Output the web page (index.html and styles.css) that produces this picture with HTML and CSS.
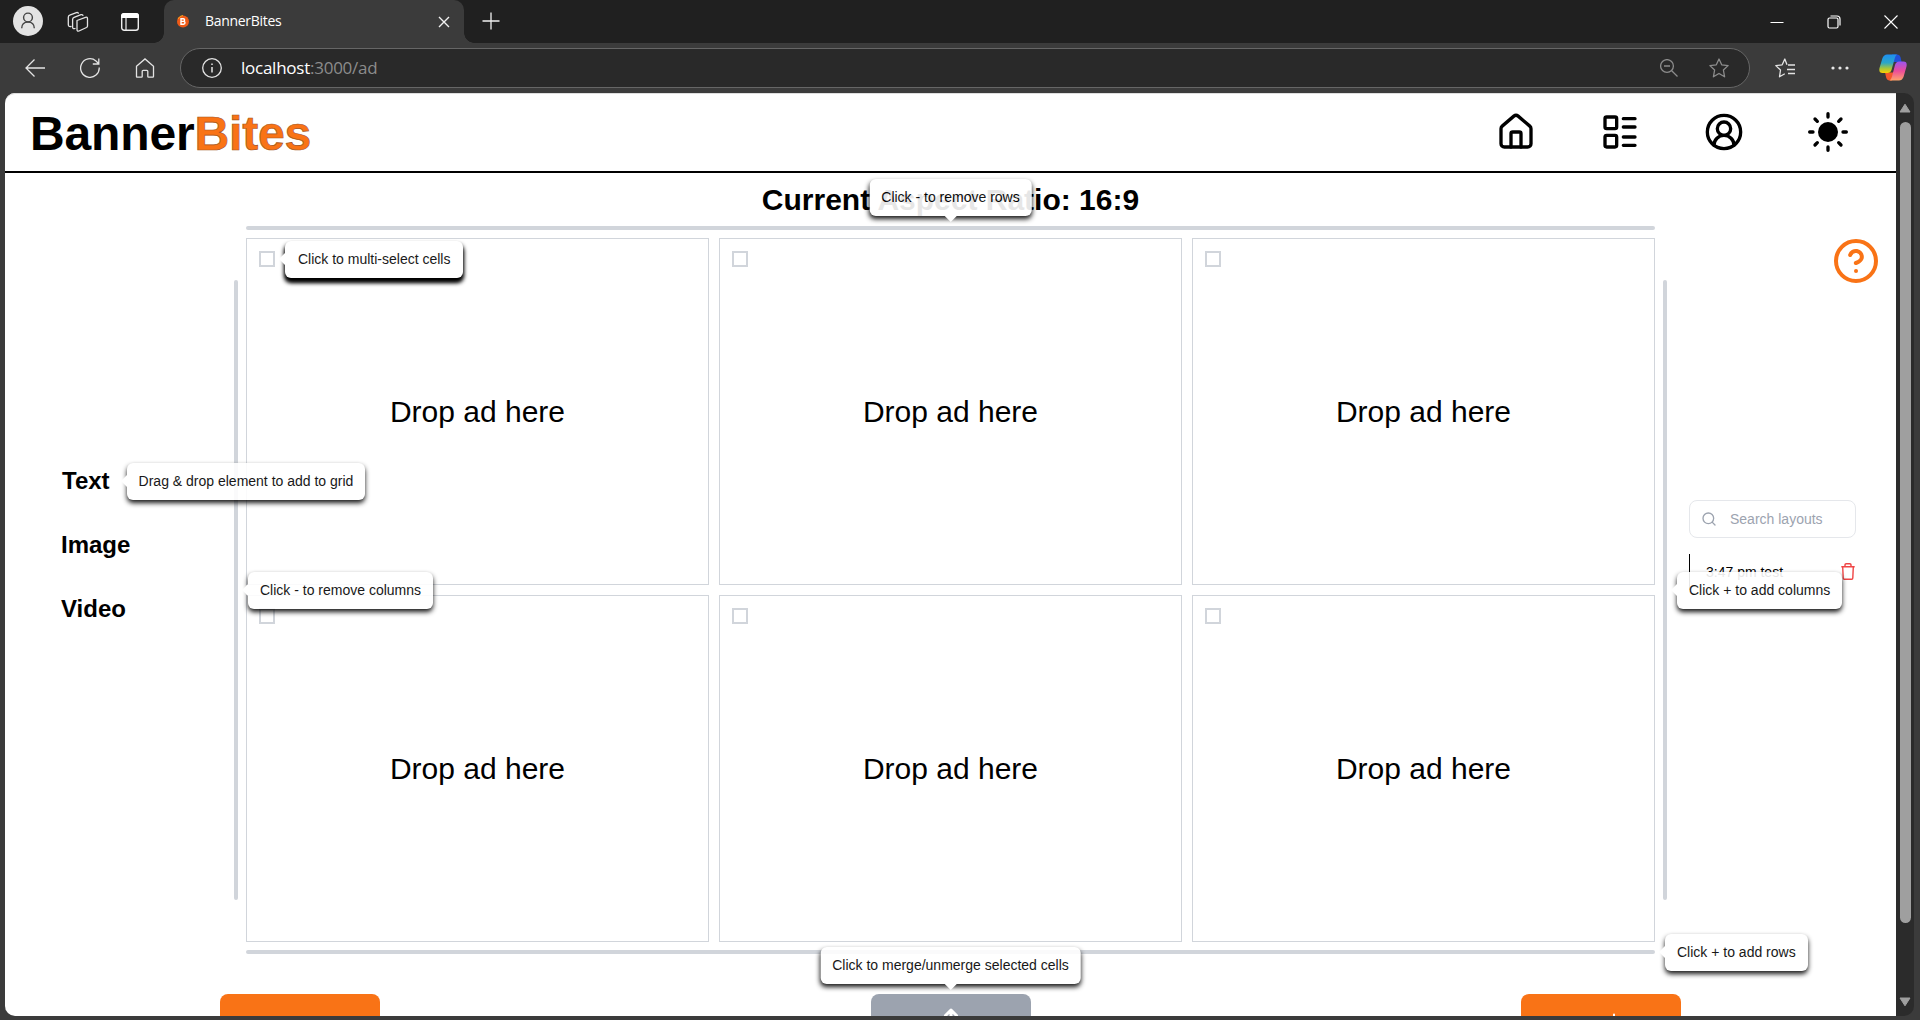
FILE: index.html
```html
<!DOCTYPE html>
<html lang="en">
<head>
<meta charset="utf-8">
<title>BannerBites</title>
<link rel="stylesheet" href="styles.css">
</head>
<body>
<div class="browser">
  <div class="titlebar">
    <div class="window-tools">
      <svg class="avatar" width="30" height="30" viewBox="0 0 30 30"><circle cx="15" cy="15" r="15" fill="#e3e3e3"/><g fill="none" stroke="#444" stroke-width="1.4"><circle cx="15" cy="11.5" r="4.4"/><path d="M8.7 22.2c0-3.4 2.2-6.200 6.300-6.200s6.300 2.800 6.300 6.200"/></g></svg>
      <svg class="spaces" width="22" height="22" viewBox="0 0 22 22" fill="none" stroke="#e4e4e4" stroke-width="1.300" stroke-linejoin="round" stroke-linecap="round"><path d="M10 9.500 18.500 6.300q2-.500 2 1.400v7.300q0 1-1 1.500l-7.500 3.500q-2 .6-2-1.400z"/><path d="M8 17.500q-2.400.8-2.400-1.500V8.500q0-1.600 1.500-2.200l6.900-2.600q1.300-.4 2 .6"/><path d="M4 15.500q-2.700.5-2.700-1.900V6.200q0-1.500 1.400-2L9.400 1.600q1.300-.3 2 .5"/></svg>
      <svg class="panel-icon" width="18" height="18" viewBox="0 0 18 18"><rect x=".7" y=".7" width="16.600" height="16.600" rx="2.500" fill="none" stroke="#eee" stroke-width="1.400"/><path d="M0 5V3a3 3 0 0 1 3-3h12a3 3 0 0 1 3 3v2z" fill="#fff"/><path d="M5 5v12" stroke="#eee" stroke-width="1.200"/></svg>
    </div>
    <div class="tab">
      <svg width="12" height="13" viewBox="0 0 12 13"><circle cx="6" cy="6.500" r="6" fill="#ee5a17"/><path d="M1 4a6 6 0 0 1 5-3.500" stroke="#fba31c" fill="none"/><path d="M4 3.800v5.400h2.600a1.400 1.400 0 0 0 0-2.800H4h2.300a1.300 1.300 0 0 0 0-2.600z" fill="none" stroke="#fff" stroke-width="1.400"/></svg>
      <span class="tab-title">BannerBites</span>
      <svg width="12" height="12" viewBox="0 0 12 12" stroke="#f1f1f1" stroke-width="1.400"><path d="M1 1l10 10M11 1 1 11"/></svg>
    </div>
    <svg class="new-tab" width="18" height="18" viewBox="0 0 18 18" stroke="#f1f1f1" stroke-width="1.300"><path d="M9 .5v17M.5 9h17"/></svg>
    <div class="window-controls">
      <svg width="14" height="14" viewBox="0 0 14 14" stroke="#fff"><path d="M.5 7.500h13"/></svg>
      <svg width="14" height="14" viewBox="0 0 14 14" fill="none" stroke="#fff" stroke-width="1.200"><rect x="1" y="3" width="10" height="10" rx="1.500"/><path d="M3.500 1H10a3 3 0 0 1 3 3v6.500"/></svg>
      <svg width="14" height="14" viewBox="0 0 14 14" stroke="#fff" stroke-width="1.100"><path d="M.5.5l13 13M13.500.5l-13 13"/></svg>
    </div>
  </div>
  <div class="toolbar">
    <div class="nav-buttons">
      <svg width="20" height="20" viewBox="0 0 20 20"><path d="M9.500 1.500 1 10l8.500 8.500M1 10h19"/></svg>
      <svg width="20" height="20" viewBox="0 0 20 20"><path d="M19.200 9.500A9.300 9.300 0 1 1 16 3l2.500 2.500M18.800.5v5.500h-6"/></svg>
      <svg width="20" height="20" viewBox="0 0 20 20"><path d="M1.500 8.200 10 .9l8.500 7.300v10.300q0 .7-.7.700h-4.300q-.7 0-.7-.7v-5.200q0-1-1-1H8.200q-1 0-1 1v5.200q0 .7-.7.700H2.200q-.7 0-.7-.7z"/></svg>
    </div>
    <div class="address">
      <svg width="20" height="20" viewBox="0 0 20 20"><circle cx="10" cy="10" r="9.300"/><path d="M10 9v5.500M10 5.500v1.500" stroke-width="1.500"/></svg>
      <span class="url"><span class="host">localhost</span>:3000/ad</span>
      <svg class="dim" width="18" height="18" viewBox="0 0 18 18"><circle cx="7" cy="7" r="6.400"/><path d="M4 7h6M11.700 11.700l5.800 5.800"/></svg>
      <svg class="dim" width="20" height="20" viewBox="0 0 20 20"><path d="m10 1 2.700 5.800 6.400.8-4.700 4.400 1.200 6.800L10 15.500l-5.600 3.300L5.600 12 .9 7.600l6.400-.8z" stroke-linejoin="round"/></svg>
    </div>
    <div class="toolbar-actions">
      <svg width="20" height="20" viewBox="0 0 20 20"><path d="M12 6.800 9.800 1 7.200 6.800l-6.400.8L5.500 12l-1 6.800 5.300-3M13 7h7M12 11.500h8M13 15.500h7" stroke-linejoin="round"/></svg>
      <svg width="18" height="4" viewBox="0 0 18 4" class="dots"><circle cx="2" cy="2" r="1.600"/><circle cx="9" cy="2" r="1.600"/><circle cx="16" cy="2" r="1.600"/></svg>
      <svg width="28" height="27" viewBox="0 0 28 27" class="copilot">
        <defs>
          <linearGradient id="cp1" x1="0" y1="0" x2="0" y2="1"><stop offset="0" stop-color="#1d8ff2"/><stop offset=".45" stop-color="#2ba6c9"/><stop offset=".75" stop-color="#a6c63c"/><stop offset="1" stop-color="#ffd000"/></linearGradient>
          <linearGradient id="cp2" x1="0" y1="0" x2="0" y2="1"><stop offset="0" stop-color="#9a55f0"/><stop offset=".5" stop-color="#ec4c9a"/><stop offset="1" stop-color="#ffa36b"/></linearGradient>
        </defs>
        <path d="M13 .5h5q2.800 0 3.600 3l1 4.500h-8z" fill="#2150d8"/>
        <path d="M6 18.500h9l-2 8h-2.500q-2.500 0-3.300-3z" fill="#f4572c"/>
        <path d="M8 .5h10q-1.600 1-2.300 4l-3.200 11.500q-1 3-4 3H3.500q-4 0-3-5L3.500 4Q5 .5 8 .5z" fill="url(#cp1)"/>
        <path d="M20 26.500h-9.500q1.800-1 2.500-4l3-11.500q1-3.500 4-3.500h4.500q4 0 3 5l-3 10.500q-1.500 3.500-4.500 3.500z" fill="url(#cp2)"/>
      </svg>
    </div>
  </div>
  <div class="viewport">
    <div class="page">
      <header class="header">
        <h1 class="logo">Banner<span class="logo-accent">Bites</span></h1>
        <nav class="menu">
          <svg viewBox="0 0 24 24"><path d="M15 21v-8a1 1 0 0 0-1-1h-4a1 1 0 0 0-1 1v8"/><path d="M3 10a2 2 0 0 1 .709-1.528l7-5.999a2 2 0 0 1 2.582 0l7 5.999A2 2 0 0 1 21 10v9a2 2 0 0 1-2 2H5a2 2 0 0 1-2-2z"/></svg>
          <svg viewBox="0 0 24 24"><rect x="3" y="3" width="7" height="7" rx="1"/><rect x="3" y="14" width="7" height="7" rx="1"/><path d="M14 4h7M14 9h7M14 15h7M14 20h7"/></svg>
          <svg viewBox="0 0 24 24"><path d="M18 20a6 6 0 0 0-12 0"/><circle cx="12" cy="10" r="4"/><circle cx="12" cy="12" r="10"/></svg>
          <svg viewBox="0 0 24 24"><circle cx="12" cy="12" r="6" fill="#000" stroke="none"/><path d="M12 1v2M12 21v2M1 12h2M21 12h2M4.200 4.200l1.400 1.400M18.400 18.400l1.400 1.400M4.200 19.800l1.400-1.400M18.400 5.600l1.400-1.400"/></svg>
        </nav>
      </header>
      <h2 class="ratio">Current Aspect Ratio: 16:9</h2>
      <main class="workspace">
        <aside class="elements">
          <div class="element element-hinted">Text<span class="tip tip-right">Drag &amp; drop element to add to grid</span></div>
          <div class="element">Image</div>
          <div class="element">Video</div>
        </aside>
        <div class="bar-v"><span class="tip tip-right">Click - to remove columns</span></div>
        <section class="board">
          <div class="bar-h"><span class="tip tip-top">Click - to remove rows</span></div>
          <div class="cells">
            <div class="cell"><span class="check"><span class="tip tip-right tip-strong">Click to multi-select cells</span></span>Drop ad here</div>
            <div class="cell"><span class="check"></span>Drop ad here</div>
            <div class="cell"><span class="check"></span>Drop ad here</div>
            <div class="cell"><span class="check"></span>Drop ad here</div>
            <div class="cell"><span class="check"></span>Drop ad here</div>
            <div class="cell"><span class="check"></span>Drop ad here</div>
          </div>
          <div class="bar-h"><span class="tip tip-right">Click + to add rows</span></div>
        </section>
        <div class="bar-v"><span class="tip tip-right">Click + to add columns</span></div>
        <aside class="layouts">
          <svg class="help" viewBox="0 0 24 24"><circle cx="12" cy="12" r="10"/><path d="M9.090 9a3 3 0 0 1 5.830 1c0 2-3 3-3 3M12 17h.01"/></svg>
          <div class="search"><svg viewBox="0 0 24 24"><circle cx="11" cy="11" r="8"/><path d="m21 21-4.300-4.300"/></svg>Search layouts</div>
          <div class="layout-row"><span class="layout-name">3:47 pm test</span>
            <svg viewBox="0 0 14 17"><path d="M.3 3.700h13.400M1.700 3.700l.5 11.300q0 1.300 1.200 1.300h7.200q1.200 0 1.200-1.300l.5-11.300M4 3.500V2q0-1.300 1.200-1.300h3.600Q10 .7 10 2v1.500"/></svg></div>
        </aside>
      </main>
      <footer class="actions">
        <div class="btn"></div>
        <div class="btn btn-muted"><span class="tip tip-top">Click to merge/unmerge selected cells</span><svg width="20" height="20" viewBox="0 0 20 20"><path d="M10 2v16M4.500 7.500 10 2l5.500 5.500"/></svg></div>
        <div class="btn btn-add"><svg width="14" height="14" viewBox="0 0 14 14"><path d="M7 1.500v12M1 7h12"/></svg></div>
      </footer>
    </div>
    <div class="scrollbar">
      <svg width="12" height="10" viewBox="0 0 12 10"><path d="M6 1.200 11 9H1z"/></svg>
      <div class="thumb"></div>
      <svg width="12" height="10" viewBox="0 0 12 10"><path d="M6 8.800 11 1H1z"/></svg>
    </div>
  </div>
</div>
</body>
</html>
```
FILE: styles.css
```css
* { box-sizing: border-box; }
body { margin: 0; overflow: hidden; font-family: "Liberation Sans", Arial, sans-serif; color: #000; }
svg { display: block; flex: none; }
h1, h2 { margin: 0; }

.browser { width: 1920px; height: 1020px; display: flex; flex-direction: column; background: #3b3b3b; font-size: 14px; }

/* window title bar */
.titlebar { height: 43px; flex: none; display: flex; background: #202020; }
.window-tools { width: 164px; height: 43px; display: flex; align-items: center; padding-left: 13px; }
.avatar { margin-top: -1px; }
.spaces { margin-left: 24px; }
.panel-icon { margin-left: 32px; }
.tab { position: relative; width: 300px; display: flex; align-items: center; padding: 0 14px 0 13px; background: #3b3b3b; border-radius: 10px 10px 0 0; }
.tab::before, .tab::after { content: ""; position: absolute; bottom: 0; width: 10px; height: 10px; }
.tab::before { left: -10px; background: radial-gradient(circle at 0 0, transparent 9.5px, #3b3b3b 10px); }
.tab::after { right: -10px; background: radial-gradient(circle at 100% 0, transparent 9.5px, #3b3b3b 10px); }
.tab-title { flex: 1; margin-left: 16px; padding-bottom: 3px; font: 14px "Open Sans", "Noto Sans", sans-serif; letter-spacing: -.3px; color: #fff; }
.new-tab { margin: 12px 0 0 18px; }
.window-controls { margin-left: auto; display: flex; align-items: center; gap: 43px; padding-right: 22px; }

/* navigation toolbar */
.toolbar { height: 50px; flex: none; display: flex; align-items: center; padding-bottom: 1px; }
.toolbar svg { fill: none; stroke: #e3e3e3; stroke-width: 1.3; }
.nav-buttons { width: 180px; display: flex; gap: 35px; padding-left: 25px; }
.address { width: 1570px; height: 40px; display: flex; align-items: center; padding: 0 20px 0 21px; background: #292929; border: 1px solid #666; border-radius: 20px; }
.url { flex: 1; margin-left: 19px; padding-bottom: 1px; font: 17px "Open Sans", "Noto Sans", sans-serif; letter-spacing: -.25px; color: #8c8c8c; }
.host { color: #fff; }
.toolbar .dim { stroke: #8c8c8c; }
.address .dim + .dim { margin-left: 31px; }
.toolbar-actions { flex: 1; display: flex; align-items: center; padding-left: 25px; }
.toolbar .dots { margin-left: 36px; fill: #e8e8e8; stroke: none; }
.toolbar .copilot { margin-left: 30px; stroke: none; }

/* page area */
.viewport { flex: 1; min-height: 0; display: flex; padding: 0 6px 4px 5px; }
.page { width: 1891px; height: 923px; overflow: hidden; background: #fff; border-radius: 10px 0 0 10px; box-shadow: inset 0 1px #ddd; }
.scrollbar { width: 18px; display: flex; flex-direction: column; align-items: center; padding: 10px 0 9px; background: #2b2b2b; border-radius: 0 10px 10px 0; }
.scrollbar svg { fill: #9f9f9f; stroke: #9f9f9f; stroke-linejoin: round; }
.thumb { width: 11px; height: 801px; margin: 9px 0 auto; background: #9f9f9f; border-radius: 6px; }

.header { height: 80px; display: flex; align-items: center; justify-content: space-between; padding: 0 48px 0 25px; border-bottom: 2px solid #000; }
.logo { padding-top: 3px; font-size: 48px; line-height: 48px; letter-spacing: -.15px; }
.logo-accent { color: #f97316; -webkit-text-stroke: .7px #a4561f; }
.menu { display: flex; gap: 64px; }
.menu svg { width: 40px; height: 40px; fill: none; stroke: #000; stroke-width: 2; stroke-linecap: round; stroke-linejoin: round; }
.ratio { height: 53px; padding: 9px 0 0; font-size: 30px; line-height: 36px; text-align: center; }

.workspace { display: flex; height: 728px; }
.elements { width: 229px; display: flex; flex-direction: column; align-items: flex-start; gap: 36px; padding: 241px 0 0 56px; }
.element { position: relative; font-size: 24px; font-weight: bold; line-height: 28px; }
.element-hinted { padding: 0 7px 0 1px; }
.bar-v { position: relative; width: 4px; height: 620px; align-self: center; background: #d1d5db; border-radius: 2px; }
.board { width: 1409px; margin: 0 8px; display: flex; flex-direction: column; gap: 8px; }
.bar-h { position: relative; height: 4px; background: #d1d5db; border-radius: 2px; }
.cells { flex: 1; display: grid; grid-template: repeat(2, 347px) / repeat(3, 463px); gap: 10px; }
.cell { position: relative; display: flex; align-items: center; justify-content: center; border: 1px solid #d1d5db; font-size: 30px; }
.check { position: absolute; top: 12px; left: 12px; width: 16px; height: 16px; border: 2px solid #d1d5db; }

.layouts { position: relative; width: 167px; margin-left: 22px; padding-top: 274px; }
.help { position: absolute; top: 11px; right: -24px; width: 48px; height: 48px; fill: none; stroke: #f97316; stroke-width: 2; stroke-linecap: round; stroke-linejoin: round; }
.search { height: 38px; display: flex; align-items: center; gap: 13px; padding-left: 11px; border: 1px solid #e5e7eb; border-radius: 8px; color: #9ca3af; }
.search svg { width: 16px; height: 16px; fill: none; stroke: #9ca3af; stroke-width: 2; stroke-linecap: round; }
.layout-row { display: flex; align-items: center; justify-content: space-between; height: 36px; margin-top: 16px; padding: 0 1px 0 16px; border-left: 1px solid #000; }
.layout-row svg { width: 14px; height: 17px; margin-top: -1px; fill: none; stroke: #ef4444; stroke-width: 1.4; }

.actions { display: flex; justify-content: space-between; padding: 40px 215px 0; }
.btn { position: relative; width: 160px; height: 48px; display: flex; justify-content: center; padding-top: 14px; background: #f97316; border-radius: 8px; }
.btn-muted { background: #9ca3af; }
.btn-muted svg { stroke-width: 3; }
.btn-add { padding: 19px 0 0 26px; }
.btn svg { fill: none; stroke: #fff; stroke-width: 2; stroke-linecap: round; stroke-linejoin: round; }
.btn-muted svg { stroke-width: 3; }

/* help tooltips */
.tip { position: absolute; z-index: 5; height: 37px; padding: 0 12px; background: #fff; border-radius: 6px; opacity: .9; box-shadow: 0 3px 5px #000; font-size: 14px; font-weight: normal; line-height: 36px; white-space: nowrap; }
.tip::after { content: ""; position: absolute; border: 6px solid transparent; }
.tip-right { left: calc(100% + 10px); top: calc(50% - 18px); }
.tip-right::after { right: 100%; top: 12px; border-right-color: #fff; border-left-width: 0; }
.tip-top { left: 50%; bottom: calc(100% + 10px); transform: translateX(-50%); }
.tip-top::after { top: 100%; left: calc(50% - 6px); border-top-color: #fff; border-bottom-width: 0; }
.tip-strong { left: calc(100% + 12px); padding: 0 13px; opacity: 1; box-shadow: 0 4px 5px #000, 0 4px 4px #000; color: #1a1a1a; }
```
